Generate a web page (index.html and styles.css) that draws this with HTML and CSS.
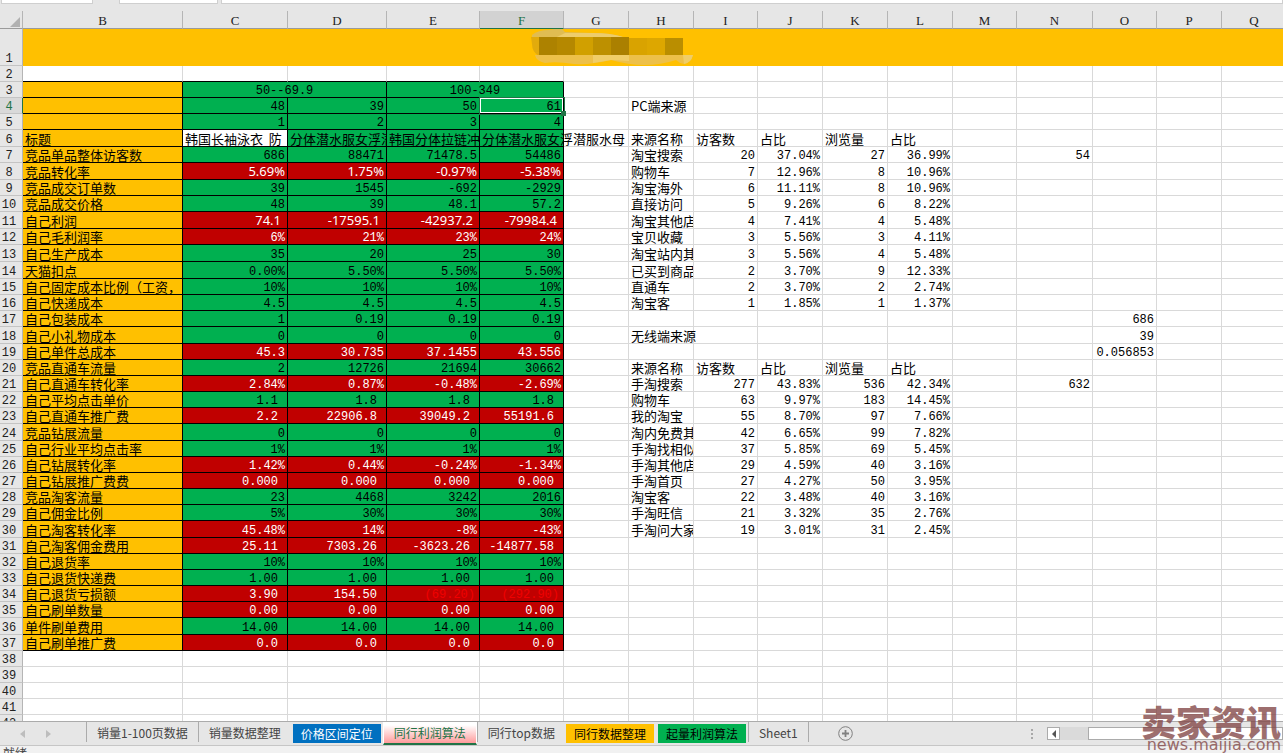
FILE: index.html
```html
<!DOCTYPE html>
<html lang="zh-CN">
<head>
<meta charset="utf-8">
<title>同行利润算法</title>
<link rel="stylesheet" href="styles.css">
</head>
<body>
<div class="app">
  <div class="formula-bar">
    <div class="name-box"></div>
    <div class="fx-box"></div>
    <div class="formula-box"></div>
  </div>
  <main class="sheet">
    <table class="grid">
      <colgroup>
        <col class="w-head"><col class="w-b"><col class="w-c"><col class="w-d"><col class="w-e"><col class="w-f">
        <col class="w-std"><col class="w-std"><col class="w-narrow"><col class="w-std"><col class="w-std"><col class="w-std">
        <col class="w-narrow"><col class="w-n"><col class="w-narrow"><col class="w-std"><col class="w-std">
      </colgroup>
      <thead>
        <tr>
          <th class="corner"><svg width="10" height="10" viewBox="0 0 10 10"><path d="M10 0V10H0Z" fill="#b1b1b1"/></svg></th>
          <th>B</th><th>C</th><th>D</th><th>E</th><th class="current">F</th><th>G</th><th>H</th><th>I</th>
          <th>J</th><th>K</th><th>L</th><th>M</th><th>N</th><th>O</th><th>P</th><th>Q</th>
        </tr>
      </thead>
      <tbody id="rows">
        <tr class="title-row">
          <th>1</th>
          <td colspan="16" class="banner">
            <svg class="mosaic" width="164" height="36" viewBox="0 0 164 36">
              <path d="M1 6Q7 1 18 1L24 0H31L34 3L62 4Q80 4 92 8H6L1 11Z" fill="#e0bc52"/>
              <path d="M34 4H62Q80 4 92 8H26Z" fill="#edcd6c"/>
              <path d="M0 8H8V27Q1 23 1 15Z" fill="#e2ab0c"/>
              <path d="M6 26H162Q160 34 153 35Q148 34 145 31Q130 36 113 36Q98 36 80 31Q60 36 43 35Q25 32 14 34Q5 32 4 26Z" fill="#edc04a"/>
              <path d="M62 26H98V32L80 31L62 34ZM152 26H162Q160 34 153 35Z" fill="#f0cd68"/>
              <rect x="8" y="8" width="18" height="18" fill="#ad8200"/>
              <rect x="26" y="8" width="18" height="18" fill="#b58800"/>
              <rect x="44" y="8" width="18" height="18" fill="#d1a000"/>
              <rect x="62" y="8" width="18" height="18" fill="#bd9000"/>
              <rect x="80" y="8" width="18" height="18" fill="#ab8000"/>
              <rect x="98" y="9" width="18" height="17" fill="#d9a300"/>
              <rect x="116" y="9" width="18" height="17" fill="#dda700"/>
              <rect x="134" y="9" width="18" height="17" fill="#ba8e00"/>
            </svg>
          </td>
        </tr>
      </tbody>
    </table>
  </main>
  <nav class="tabs" aria-label="工作表">
    <div class="tab-arrows">
      <button aria-label="上一张"><svg width="5" height="8" viewBox="0 0 5 8"><path d="M5 0V8L0 4Z" fill="#bdbdbd"/></svg></button>
      <button aria-label="下一张"><svg width="5" height="8" viewBox="0 0 5 8"><path d="M0 0V8L5 4Z" fill="#bdbdbd"/></svg></button>
    </div>
    <button class="tab">销量1-100页数据</button>
    <button class="tab">销量数据整理</button>
    <button class="tab filled blue">价格区间定位</button>
    <button class="tab active">同行利润算法</button>
    <button class="tab">同行top数据</button>
    <button class="tab filled orange">同行数据整理</button>
    <button class="tab filled green">起量利润算法</button>
    <button class="tab last">Sheet1</button>
    <button class="add" aria-label="新工作表"><svg width="15" height="15" viewBox="0 0 15 15" fill="none" stroke="#808080"><circle cx="7.5" cy="7.5" r="6.8"/><path d="M7.5 4V11M4 7.5H11" stroke-width="1.8"/></svg></button>
    <div class="scroll">
      <svg class="grip" width="3" height="10" viewBox="0 0 3 10" fill="#a8a8a8"><path d="M0 0h2v2H0zM0 4h2v2H0zM0 8h2v2H0z"/></svg>
      <button class="scroll-left" aria-label="向左滚动"><svg width="4" height="8" viewBox="0 0 4 8"><path d="M4 0V8L0 4Z" fill="#555"/></svg></button>
      <div class="track"><div class="thumb"></div></div>
    </div>
  </nav>
  <footer class="status">就绪</footer>
  <div class="watermark">
    <div class="brand">卖家资讯</div>
    <div class="site">news.maijia.com</div>
  </div>
</div>
<script src="sheet.js"></script>
</body>
</html>
```
FILE: styles.css
```css
* { box-sizing: border-box; }
body { margin: 0; }
button { border: 0; padding: 0; margin: 0; background: none; font: inherit; color: inherit; }
svg { display: block; }

.app {
  position: relative;
  display: flex;
  flex-direction: column;
  height: 100vh;
  overflow: hidden;
  background: #e6e6e6;
  font-family: "Noto Sans CJK SC", sans-serif;
}

/* formula bar */
.formula-bar { display: flex; height: 11px; padding-left: 1px; flex: none; }
.formula-bar div { height: 4px; background: #fff; border: solid #cfcfcf; border-width: 0 1px 1px; }
.formula-bar .name-box { width: 92px; }
.formula-bar .fx-box { width: 99px; margin-left: 26px; }
.formula-bar .formula-box { flex: 1; margin-left: 3px; }

/* grid */
.sheet { flex: 1; min-height: 0; overflow: hidden; background: #fff; }
.grid { width: 0; table-layout: fixed; border-collapse: separate; border-spacing: 0; }
.w-head { width: 23px; }
.w-b { width: 160px; }
.w-c { width: 105px; }
.w-d { width: 99px; }
.w-e { width: 93px; }
.w-f { width: 84px; }
.w-n { width: 76px; }
.w-std { width: 65px; }
.w-narrow { width: 64px; }

.grid th {
  padding: 0;
  background: #e6e6e6;
  color: #222;
  font: 12px/12px "Liberation Mono", monospace;
  border-bottom: 1px solid #c4c4c4;
  border-right: 1px solid #b5b5b5;
}
.grid thead th {
  height: 17px;
  padding-top: 2px;
  font: 13px/15px "Liberation Serif", serif;
  border-bottom-color: #9b9b9b;
}
.grid .corner svg { margin: 2px 0 0 10px; }
.grid tbody th { padding-right: 4px; vertical-align: bottom; }
.grid thead th.current { background: #d2d2d2; color: #217346; border-bottom-color: #217346; }
.grid tbody th.current { background: #d9d9d9; color: #217346; border-right-color: #217346; }

.grid tr { height: 16px; }
.grid tr.tall { height: 17px; }
.grid tr.title-row { height: 37px; }
.grid td {
  padding: 0 2px;
  white-space: nowrap;
  vertical-align: bottom;
  font-size: 13px;
  line-height: 15px;
  color: #000;
  border-right: 1px solid #d9d9d9;
  border-bottom: 1px solid #d9d9d9;
}
.grid td.banner { padding: 0 0 0 508px; background: #ffc000; border-color: #ffc000; line-height: 0; vertical-align: top; }
.grid td.num { text-align: right; font: 12px/12px "Liberation Mono", monospace; }
.grid td.center { text-align: center; }
.grid td.clip { overflow: hidden; }
.grid td.label { background: #ffc000; border-color: #000; }
.grid td.green { background: #00b050; border-color: #000; }
.grid td.red { background: #c00000; border-color: #000; color: #fff; }
.grid td.edge { border-bottom-color: #000; }
.grid td.title-cell { border-color: #000; }
.grid td.sans { font: 13px/15px "Noto Sans", sans-serif; }
.grid td.pad { padding-right: 9px; }
.grid td.sans.pad { padding-right: 6px; }
.grid td.negative { color: #f00000; padding-right: 4px; }
.grid td.selected {
  position: relative;
  outline: 1px solid #217346;
  box-shadow: inset 0 0 0 1px #fff;
}
.grid td.selected::after {
  content: "";
  position: absolute;
  right: -3px;
  bottom: -3px;
  width: 5px;
  height: 5px;
  background: #217346;
}

/* sheet tabs */
.tabs {
  display: flex;
  flex: none;
  height: 25px;
  border-top: 1px solid #ababab;
  border-bottom: 1px solid #c6c6c6;
  color: #444;
  font-size: 12px;
  line-height: 19px;
}
.tab-arrows { display: flex; gap: 21px; width: 86px; padding-left: 20px; align-items: center; }
.tab { position: relative; padding: 0 10px; margin: 0 0 3px; white-space: nowrap; border-left: 1px solid #ababab; }
.tab.filled { padding: 0 8px; margin: 2px 2px 2px 1px; border-left: 0; }
.tab.blue { background: #0070c0; color: #fff; margin-left: 2px; }
.tab.orange { background: #ffc000; color: #000; margin-right: 3px; }
.tab.green { background: #00b050; color: #000; }
.tab.active {
  margin: 0;
  padding: 0 10px;
  background: linear-gradient(#fff 15%, #ff9c9c);
  color: #217346;
  border: solid #fff;
  border-width: 0 1px 2px;
  border-bottom-color: #217346;
}
.tab.last { border-right: 1px solid #ababab; }
.add { margin-left: 29px; }
.scroll { display: flex; align-items: center; flex: 0 0 252px; margin-left: auto; }
.grip { margin-right: 13px; }
.scroll-left { display: grid; place-items: center; width: 13px; height: 13px; background: #fff; border: 1px solid #ababab; }
.track { flex: 1; height: 13px; padding-left: 28px; background: #dadada; }
.thumb { height: 13px; background: #fff; border: 1px solid #ababab; }
.status { flex: none; height: 7px; overflow: hidden; padding-left: 3px; background: #f1f1f1; color: #444; font-size: 12px; line-height: 13px; }

/* corner watermark */
.watermark { position: absolute; right: 2px; bottom: 0; color: #854a4a; opacity: .8; text-align: right; }
.brand { font-size: 35px; font-weight: 900; line-height: 33px; }
.site { font: 16px/16px "DejaVu Sans", sans-serif; }
```
FILE: sheet.js
```js
// Left block: label, tone (g = green, r = red), number style, values of C..F
const left = {
  3: ["", "g", "merge", ["50--69.9", "100-349"]],
  4: ["", "g", "", ["48", "39", "50", "61"]],
  5: ["", "g", "", ["1", "2", "3", "4"]],
  6: ["标题", "g", "text", ["韩国长袖泳衣\u00a0 防", "分体潜水服女浮潜", "韩国分体拉链冲浪", "分体潜水服女浮潜服水母"]],
  7: ["竞品单品整体访客数", "g", "", ["686", "88471", "71478.5", "54486"]],
  8: ["竞品转化率", "r", "sans", ["5.69%", "1.75%", "-0.97%", "-5.38%"]],
  9: ["竞品成交订单数", "g", "", ["39", "1545", "-692", "-2929"]],
  10: ["竞品成交价格", "g", "", ["48", "39", "48.1", "57.2"]],
  11: ["自己利润", "r", "sans pad", ["74.1", "-17595.1", "-42937.2", "-79984.4"]],
  12: ["自己毛利润率", "r", "", ["6%", "21%", "23%", "24%"]],
  13: ["自己生产成本", "g", "", ["35", "20", "25", "30"]],
  14: ["天猫扣点", "g", "", ["0.00%", "5.50%", "5.50%", "5.50%"]],
  15: ["自己固定成本比例（工资，", "g", "", ["10%", "10%", "10%", "10%"]],
  16: ["自己快递成本", "g", "", ["4.5", "4.5", "4.5", "4.5"]],
  17: ["自己包装成本", "g", "", ["1", "0.19", "0.19", "0.19"]],
  18: ["自己小礼物成本", "g", "", ["0", "0", "0", "0"]],
  19: ["自己单件总成本", "r", "", ["45.3", "30.735", "37.1455", "43.556"]],
  20: ["竞品直通车流量", "g", "", ["2", "12726", "21694", "30662"]],
  21: ["自己直通车转化率", "r", "", ["2.84%", "0.87%", "-0.48%", "-2.69%"]],
  22: ["自己平均点击单价", "g", "pad", ["1.1", "1.8", "1.8", "1.8"]],
  23: ["自己直通车推广费", "r", "pad", ["2.2", "22906.8", "39049.2", "55191.6"]],
  24: ["竞品钻展流量", "g", "", ["0", "0", "0", "0"]],
  25: ["自己行业平均点击率", "g", "", ["1%", "1%", "1%", "1%"]],
  26: ["自己钻展转化率", "r", "", ["1.42%", "0.44%", "-0.24%", "-1.34%"]],
  27: ["自己钻展推广费费", "r", "pad", ["0.000", "0.000", "0.000", "0.000"]],
  28: ["竞品淘客流量", "g", "", ["23", "4468", "3242", "2016"]],
  29: ["自己佣金比例", "g", "", ["5%", "30%", "30%", "30%"]],
  30: ["自己淘客转化率", "r", "", ["45.48%", "14%", "-8%", "-43%"]],
  31: ["自己淘客佣金费用", "r", "pad", ["25.11", "7303.26", "-3623.26", "-14877.58"]],
  32: ["自己退货率", "g", "", ["10%", "10%", "10%", "10%"]],
  33: ["自己退货快递费", "g", "pad", ["1.00", "1.00", "1.00", "1.00"]],
  34: ["自己退货亏损额", "r", "pad", ["3.90", "154.50", "(69.20)", "(292.90)"]],
  35: ["自己刷单数量", "r", "pad", ["0.00", "0.00", "0.00", "0.00"]],
  36: ["单件刷单费用", "g", "pad", ["14.00", "14.00", "14.00", "14.00"]],
  37: ["自己刷单推广费", "r", "pad", ["0.0", "0.0", "0.0", "0.0"]]
};

// Right block: values of H..O
const heads = ["来源名称", "访客数", "占比", "浏览量", "占比"];
const right = {
  4: ["PC端来源"],
  6: heads,
  7: ["淘宝搜索", "20", "37.04%", "27", "36.99%", "", "54"],
  8: ["购物车", "7", "12.96%", "8", "10.96%"],
  9: ["淘宝海外", "6", "11.11%", "8", "10.96%"],
  10: ["直接访问", "5", "9.26%", "6", "8.22%"],
  11: ["淘宝其他店铺", "4", "7.41%", "4", "5.48%"],
  12: ["宝贝收藏", "3", "5.56%", "3", "4.11%"],
  13: ["淘宝站内其他", "3", "5.56%", "4", "5.48%"],
  14: ["已买到商品", "2", "3.70%", "9", "12.33%"],
  15: ["直通车", "2", "3.70%", "2", "2.74%"],
  16: ["淘宝客", "1", "1.85%", "1", "1.37%"],
  17: ["", "", "", "", "", "", "", "686"],
  18: ["无线端来源", "", "", "", "", "", "", "39"],
  19: ["", "", "", "", "", "", "", "0.056853"],
  20: heads,
  21: ["手淘搜索", "277", "43.83%", "536", "42.34%", "", "632"],
  22: ["购物车", "63", "9.97%", "183", "14.45%"],
  23: ["我的淘宝", "55", "8.70%", "97", "7.66%"],
  24: ["淘内免费其他", "42", "6.65%", "99", "7.82%"],
  25: ["手淘找相似", "37", "5.85%", "69", "5.45%"],
  26: ["手淘其他店铺", "29", "4.59%", "40", "3.16%"],
  27: ["手淘首页", "27", "4.27%", "50", "3.95%"],
  28: ["淘宝客", "22", "3.48%", "40", "3.16%"],
  29: ["手淘旺信", "21", "3.32%", "35", "2.76%"],
  30: ["手淘问大家", "19", "3.01%", "31", "2.45%"]
};

const tallRows = [6, 8, 11, 13, 14, 18, 24, 30, 36];
const body = document.getElementById("rows");

function cell(row, text, classes, span) {
  const td = document.createElement("td");
  td.textContent = text;
  if (classes) td.className = classes;
  if (span) td.colSpan = span;
  row.append(td);
}

for (let n = 2; n <= 42; n++) {
  const row = document.createElement("tr");
  if (tallRows.includes(n)) row.className = "tall";
  const head = document.createElement("th");
  head.textContent = n;
  if (n === 4) head.className = "current";
  row.append(head);

  const block = left[n];
  if (block) {
    const [label, toneKey, style, values] = block;
    const tone = toneKey === "g" ? "green" : "red";
    cell(row, label, "label");
    values.forEach((value, i) => {
      if (style === "merge") cell(row, value, "num center green", 2);
      else if (style === "text") cell(row, value, i === 0 ? "title-cell" : i < 3 ? "green clip" : "green");
      else {
        let names = "num " + tone + " " + style;
        if (value.startsWith("(")) names += " negative";
        if (n === 4 && i === 3) names += " selected";
        cell(row, value, names);
      }
    });
  } else {
    for (let i = 0; i < 5; i++) cell(row, "", n === 2 ? "edge" : "");
  }

  cell(row, "", "");
  const extra = right[n] || [];
  for (let i = 0; i < 10; i++) {
    const value = extra[i] || "";
    const numeric = /^[\d.]+%?$/.test(value);
    const overlong = i === 0 && n !== 18 && value.length > 4 && extra[1];
    cell(row, value, numeric ? "num" : overlong ? "clip" : "");
  }
  body.append(row);
}
```
